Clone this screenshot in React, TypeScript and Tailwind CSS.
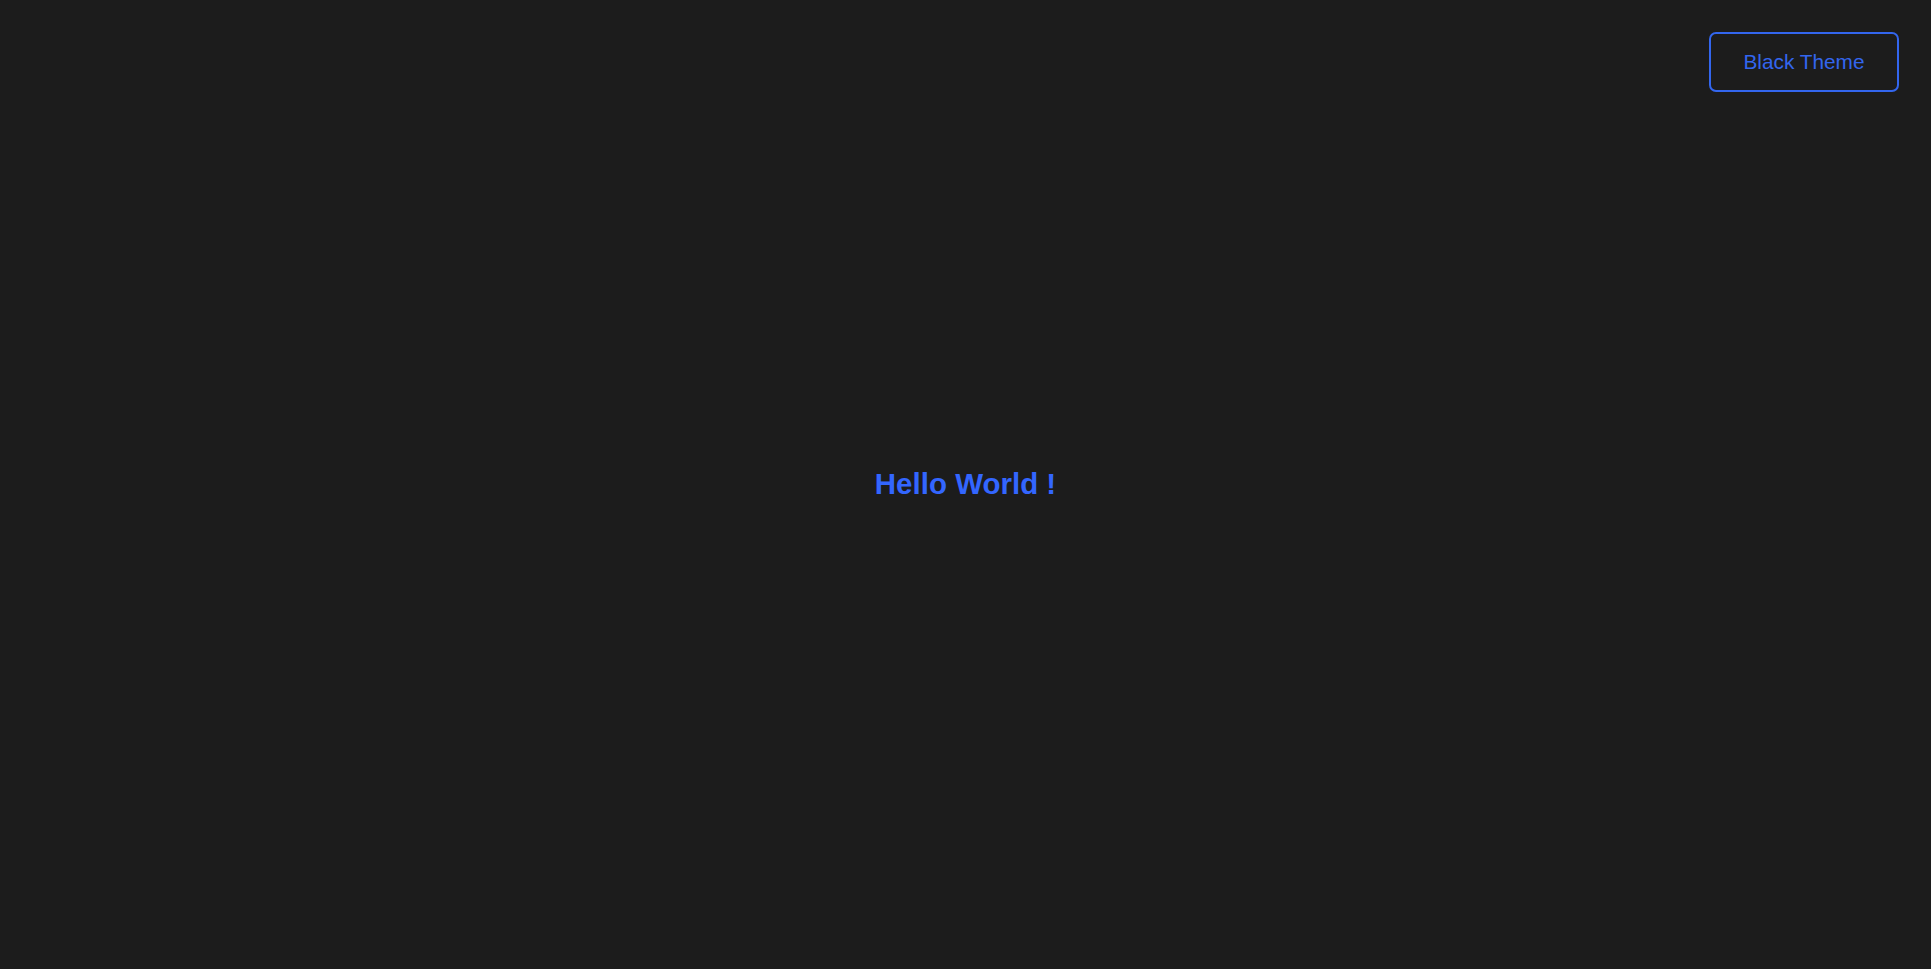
export default function App() {
  return (
    <div className="relative flex h-[969px] w-full items-center justify-center bg-[#1c1c1c] font-['Liberation_Sans',Arial,sans-serif]">
      <button className="absolute right-[32px] top-[32px] h-[60px] w-[190px] rounded-[7px] border-2 border-[#3366ee] bg-transparent text-[20.8px] text-[#3366ee]">
        Black Theme
      </button>
      <h1 className="text-[29.5px] font-bold text-[#3366ff]">Hello World !</h1>
    </div>
  );
}
